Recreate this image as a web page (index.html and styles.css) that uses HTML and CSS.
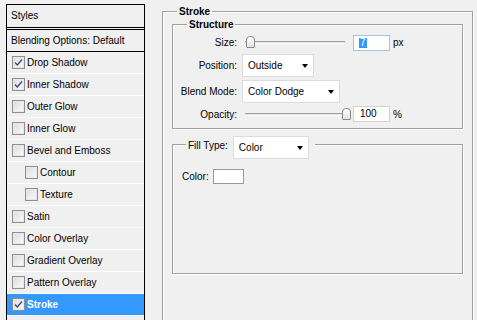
FILE: index.html
```html
<!DOCTYPE html>
<html>
<head>
	<title>Layer Style</title>
	<link rel="stylesheet" href="styles.css">
</head>
<body>
	<div class="window">
		<div class="styles-panel">
			<div class="panel-head">Styles</div>
			<div class="panel-blend">Blending Options: Default</div>
			<ul class="effects">
				<li class="effect"><span class="check"><svg viewBox="0 0 11 11"><path d="M2 5.5 L4.3 8 L9 2.5"/></svg></span>Drop Shadow</li>
				<li class="effect"><span class="check"><svg viewBox="0 0 11 11"><path d="M2 5.5 L4.3 8 L9 2.5"/></svg></span>Inner Shadow</li>
				<li class="effect"><span class="check"></span>Outer Glow</li>
				<li class="effect"><span class="check"></span>Inner Glow</li>
				<li class="effect"><span class="check"></span>Bevel and Emboss</li>
				<li class="effect sub"><span class="check"></span>Contour</li>
				<li class="effect sub"><span class="check"></span>Texture</li>
				<li class="effect"><span class="check"></span>Satin</li>
				<li class="effect"><span class="check"></span>Color Overlay</li>
				<li class="effect"><span class="check"></span>Gradient Overlay</li>
				<li class="effect"><span class="check"></span>Pattern Overlay</li>
				<li class="effect active"><span class="check"><svg viewBox="0 0 11 11"><path d="M2 5.5 L4.3 8 L9 2.5"/></svg></span>Stroke</li>
			</ul>
		</div>

		<fieldset class="group group-stroke">
			<legend>Stroke</legend>
			<fieldset class="group group-structure">
				<legend>Structure</legend>
				<div class="form-grid">
					<label>Size:</label>
					<div class="control">
						<div class="slider">
							<div class="slider-track"></div>
							<div class="slider-thumb thumb-size"></div>
						</div>
						<div class="num num-focus"><span class="sel">7</span></div>
						<span class="unit">px</span>
					</div>

					<label>Position:</label>
					<div class="control">
						<div class="select select-position">Outside<span class="arrow"></span></div>
					</div>

					<label>Blend Mode:</label>
					<div class="control">
						<div class="select select-blend">Color Dodge<span class="arrow"></span></div>
					</div>

					<label>Opacity:</label>
					<div class="control">
						<div class="slider">
							<div class="slider-track"></div>
							<div class="slider-thumb thumb-opacity"></div>
						</div>
						<div class="num">100</div>
						<span class="unit">%</span>
					</div>
				</div>
			</fieldset>

			<fieldset class="group group-fill">
				<legend class="legend-select">
					<span class="legend-label">Fill Type:</span>
					<div class="select select-fill">Color<span class="arrow"></span></div>
				</legend>
				<div class="color-row">
					<span>Color:</span>
					<span class="swatch"></span>
				</div>
			</fieldset>
		</fieldset>
	</div>
</body>
</html>
```

FILE: styles.css
```css
html {
  box-sizing: border-box;
}

*, *::before, *::after {
  box-sizing: inherit;
  margin: 0;
  padding: 0;
}

body {
  font-family: 'Liberation Sans', Arial, sans-serif;
  font-size: 10px;
  color: #000;
  background-color: #f0f0f0;
  overflow: hidden;
}

.window {
  display: flex;
  align-items: flex-start;
  height: 320px;
  overflow: hidden;
}

/* left list */
.styles-panel {
  width: 139px;
  height: 316px;
  margin: 4px 0 0 6px;
  border: 1px solid #000;
  border-bottom: 0;
}

.panel-head {
  height: 23px;
  line-height: 22px;
  padding-left: 4px;
  border-bottom: 1px solid #000;
}

.panel-blend {
  height: 23px;
  line-height: 21px;
  margin-top: 1px;
  padding-left: 4px;
  border-top: 1px solid #000;
  border-bottom: 1px solid #000;
}

.effects {
  list-style: none;
}

.effect {
  height: 22px;
  display: flex;
  align-items: center;
  gap: 2px;
  padding-left: 5px;
  border-bottom: 1px solid #fff;
}

.effect.sub {
  padding-left: 18px;
}

.effect.active {
  background-color: #3399ff;
  color: #fff;
  font-weight: bold;
}

.check {
  width: 13px;
  height: 13px;
  flex: none;
  border: 1px solid #8e8e8e;
  background: linear-gradient(135deg, #dcdcdc, #fbfbfb);
  box-shadow: inset 0 0 0 1px #e8e8e8;
}

.check svg {
  display: block;
  width: 11px;
  height: 11px;
  fill: none;
  stroke: #3e4a88;
  stroke-width: 1.4;
}

/* group boxes */
.group {
  border: 1px solid #a0a0a0;
  box-shadow: inset 1px 1px 0 #fff, 1px 1px 0 #fff;
  min-width: 0;
}

.group legend {
  font-weight: bold;
  line-height: 13px;
  padding: 0 2px;
  background-color: #f0f0f0;
}

.group-stroke {
  width: 311px;
  height: 315px;
  margin: 5px 0 0 17px;
  padding: 0 9px;
  border-bottom: 0;
}

.group-stroke > legend {
  margin-left: 5px;
}

.group-structure {
  padding: 3px 0 6px 0;
}

.group-structure > legend {
  margin-left: 14px;
}

.form-grid {
  display: grid;
  grid-template-columns: 64px 1fr;
  grid-template-rows: 17px 23px 23px 16px;
  column-gap: 5px;
  row-gap: 3px;
  align-items: center;
}

.form-grid label {
  text-align: right;
}

.control {
  display: flex;
  align-items: center;
}

.slider {
  position: relative;
  width: 100px;
  height: 15px;
  margin-left: 3px;
}

.slider-track {
  position: absolute;
  left: 0;
  right: 0;
  top: 6px;
  height: 3px;
  border-top: 1px solid #a0a0a0;
  border-bottom: 1px solid #fff;
  background-color: #e2e2e2;
}

.slider-thumb {
  position: absolute;
  top: 1px;
  width: 9px;
  height: 12px;
  border: 1px solid #8a8a8a;
  border-radius: 4px 4px 1px 1px;
  background: linear-gradient(#ffffff, #e4e4e4);
}

.thumb-size {
  left: 1px;
}

.thumb-opacity {
  left: 97px;
}

.num {
  width: 37px;
  height: 16px;
  margin-left: 8px;
  padding-left: 6px;
  line-height: 14px;
  border: 1px solid #d2d2d2;
  background-color: #fff;
}

.num-focus {
  padding-left: 5px;
  border-color: #a9c3df;
}

.sel {
  display: inline-block;
  line-height: 10px;
  padding: 0 1px;
  background-color: #3399ff;
  color: #fff;
}

.unit {
  margin-left: 3px;
}

.select {
  height: 23px;
  display: flex;
  align-items: center;
  justify-content: space-between;
  padding: 0 5px 0 5px;
  border: 1px solid #dcdcdc;
  background-color: #fff;
  font-weight: normal;
}

.select-position {
  width: 72px;
}

.select-blend {
  width: 98px;
}

.select-fill {
  width: 76px;
  flex: none;
}

.arrow {
  width: 1px;
  height: 0;
  border-left: 3px solid transparent;
  border-right: 3px solid transparent;
  border-top: 4px solid #000;
}

/* fill box */
.group-fill {
  height: 138px;
  margin-top: 7px;
  padding: 17px 9px 0 9px;
}

.group-fill > .legend-select {
  display: flex;
  align-items: flex-start;
  height: 16px;
  margin-left: 4px;
  padding: 0 6px 0 2px;
  font-weight: normal;
}

.legend-label {
  margin-top: 3px;
  margin-right: 5px;
  line-height: 13px;
}

.color-row {
  display: flex;
  align-items: center;
  gap: 4px;
}

.swatch {
  width: 31px;
  height: 15px;
  border: 1px solid #999;
  background-color: #fff;
}
```
